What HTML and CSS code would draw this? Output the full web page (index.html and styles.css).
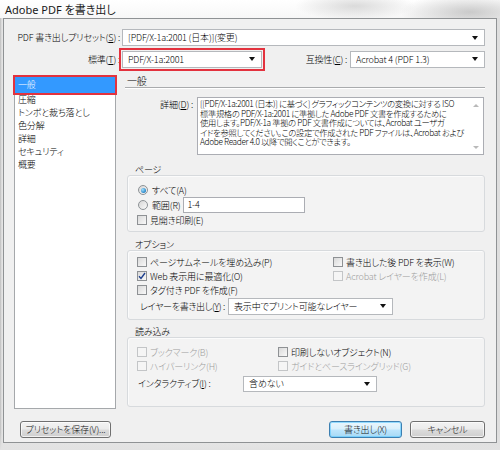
FILE: index.html
```html
<!DOCTYPE html>
<html lang="ja">
<head>
<meta charset="utf-8">
<title>Adobe PDF を書き出し</title>
<link rel="stylesheet" href="styles.css">
</head>
<body>
<div class="window">
  <div class="titlebar">Adobe PDF を書き出し</div>
  <div class="dialog">
    <div class="top-row">
      <span class="top-label">PDF 書き出しプリセット(<u>S</u>) :</span>
      <div class="select select-preset"><span>[PDF/X-1a:2001 (日本)](変更)</span><i class="arrow"></i></div>
    </div>
    <div class="top-row row-std">
      <span class="top-label">標準(<u>T</u>) :</span>
      <div class="select select-std marked"><span>PDF/X-1a:2001</span><i class="arrow"></i></div>
      <span class="compat-label">互換性(<u>C</u>) :</span>
      <div class="select select-compat"><span>Acrobat 4 (PDF 1.3)</span><i class="arrow"></i></div>
    </div>

    <div class="main">
      <ul class="nav">
        <li class="nav-item selected">一般</li>
        <li class="nav-item">圧縮</li>
        <li class="nav-item">トンボと裁ち落とし</li>
        <li class="nav-item">色分解</li>
        <li class="nav-item">詳細</li>
        <li class="nav-item">セキュリティ</li>
        <li class="nav-item">概要</li>
      </ul>

      <div class="pane">
        <div class="pane-head">一般</div>

        <div class="detail-row">
          <span class="detail-label">詳細(<u>D</u>) :</span>
          <div class="textarea">
            <div class="ta-text">[[PDF/X-1a:2001 (日本)] に基づく] グラフィックコンテンツの変換に対する ISO<br>標準規格の PDF/X-1a:2001 に準拠した Adobe PDF 文書を作成するために<br>使用します。PDF/X-1a 準拠の PDF 文書作成については、Acrobat ユーザガ<br>イドを参照してください。この設定で作成された PDF ファイルは、Acrobat および<br>Adobe Reader 4.0 以降で開くことができます。</div>
            <div class="ta-scroll"><i class="sarrow up"></i><i class="sarrow down"></i></div>
          </div>
        </div>

        <div class="group-title title-pages">ページ</div>
        <div class="group-box box-pages">
          <div class="opt"><span class="radio on"></span><span>すべて(A)</span></div>
          <div class="opt opt-range"><span class="radio"></span><span>範囲(R)</span><div class="input">1-4</div></div>
          <div class="opt"><span class="cb"></span><span>見開き印刷(E)</span></div>
        </div>

        <div class="group-title title-options">オプション</div>
        <div class="group-box box-options">
          <div class="opt-grid grid-options">
            <div class="opt"><span class="cb"></span><span>ページサムネールを埋め込み(P)</span></div>
            <div class="opt"><span class="cb"></span><span>書き出した後 PDF を表示(W)</span></div>
            <div class="opt"><span class="cb checked"><svg width="8" height="8" viewBox="0 0 8 8"><path d="M1 4.2 L3 6.4 L7 1" fill="none" stroke="#1d3f8e" stroke-width="1.4"/></svg></span><span>Web 表示用に最適化(O)</span></div>
            <div class="opt disabled"><span class="cb"></span><span>Acrobat レイヤーを作成(L)</span></div>
            <div class="opt"><span class="cb"></span><span>タグ付き PDF を作成(F)</span></div>
          </div>
          <div class="select-row layer-row">
            <span class="layer-label">レイヤーを書き出し(<u>Y</u>) :</span>
            <div class="select select-layer"><span>表示中でプリント可能なレイヤー</span><i class="arrow"></i></div>
          </div>
        </div>

        <div class="group-title title-import">読み込み</div>
        <div class="group-box box-import">
          <div class="opt-grid grid-import">
            <div class="opt disabled"><span class="cb"></span><span>ブックマーク(B)</span></div>
            <div class="opt"><span class="cb"></span><span>印刷しないオブジェクト(N)</span></div>
            <div class="opt disabled"><span class="cb"></span><span>ハイパーリンク(H)</span></div>
            <div class="opt disabled"><span class="cb"></span><span>ガイドとベースライングリッド(G)</span></div>
          </div>
          <div class="select-row interactive-row">
            <span class="inter-label">インタラクティブ(<u>I</u>) :</span>
            <div class="select select-inter"><span>含めない</span><i class="arrow"></i></div>
          </div>
        </div>
      </div>
    </div>

    <div class="footer">
      <button class="btn btn-save">プリセットを保存(V)...</button>
      <div class="footer-right">
        <button class="btn btn-export">書き出し(X)</button>
        <button class="btn btn-cancel">キャンセル</button>
      </div>
    </div>
  </div>
</div>
</body>
</html>
```

FILE: styles.css
```css
* { box-sizing: border-box; }

html, body {
  margin: 0;
  padding: 0;
}

body {
  width: 500px;
  height: 450px;
  overflow: hidden;
  font-family: "Noto Sans CJK JP", "Noto Sans", sans-serif;
  font-weight: 300;
  font-size: 9px;
  font-feature-settings: "palt";
  letter-spacing: -0.15px;
  color: #000;
}

u { text-decoration: underline; text-underline-offset: 1px; }

.window {
  width: 500px;
  height: 450px;
  background:
    linear-gradient(180deg, rgba(255,255,255,0) 0%, rgba(255,255,255,0) 96%, #e2e2e2 100%),
    linear-gradient(90deg, #bdbdbd 0, #e4e4e4 2px, #e9e9e9 50%, #dedede 100%);
  display: flex;
  flex-direction: column;
}

.titlebar {
  height: 18px;
  padding-left: 5px;
  font-family: "Noto Sans", "Noto Sans CJK JP", sans-serif;
  font-weight: 400;
  font-size: 11px;
  letter-spacing: 0;
  line-height: 20px;
  color: #1a1a1a;
  background:
    radial-gradient(ellipse 60px 14px at 355px 6px, rgba(190,190,190,0.55), rgba(190,190,190,0)),
    radial-gradient(ellipse 70px 18px at 470px 12px, rgba(170,170,170,0.6), rgba(170,170,170,0)),
    linear-gradient(180deg, #ffffff, #f7f7f7);
}

.dialog {
  margin: 0 3px;
  height: 425px;
  border: 1px solid #8f9294;
  background: #f0f0f0;
  padding: 10px 11px 4px 10px;
  display: flex;
  flex-direction: column;
}

/* top rows */
.top-row {
  display: flex;
  align-items: center;
  height: 17px;
}
.row-std {
  margin-top: 4px;
  height: 18px;
}
.top-label {
  width: 106px;
  margin-right: 2px;
  text-align: right;
  white-space: nowrap;
}
.compat-label {
  margin-left: auto;
  margin-right: 3px;
  white-space: nowrap;
}

.select {
  display: flex;
  align-items: center;
  height: 17px;
  background: #fff;
  border: 1px solid #b5b8bc;
  padding: 0 6px 0 5px;
  white-space: nowrap;
}
.select span { flex: 1; overflow: hidden; }
.arrow {
  flex: none;
  width: 0;
  height: 0;
  border-left: 3px solid transparent;
  border-right: 3px solid transparent;
  border-top: 4px solid #111;
  margin-left: 4px;
}
.select-preset { flex: 1; }
.select-std { width: 140px; }
.select-compat { width: 135px; }
.marked {
  outline: 2px solid #e3323e;
  outline-offset: 1px;
}

/* main */
.main {
  display: flex;
  margin-top: 7px;
  height: 334px;
}

.nav {
  list-style: none;
  margin: 0;
  padding: 1px 0 0 0;
  width: 102px;
  height: 334px;
  flex: none;
  background: #fff;
  border: 1px solid #a5a8ab;
}
.nav-item {
  height: 13px;
  line-height: 13px;
  padding-left: 3px;
  white-space: nowrap;
}
.nav-item.selected {
  height: 16px;
  line-height: 16px;
  background: #3399ff;
  color: #fff;
  outline: 2px solid #e3323e;
  outline-offset: 0;
}

.pane {
  flex: 1;
  margin-left: 9px;
  display: flex;
  flex-direction: column;
}

.pane-head {
  height: 13px;
  line-height: 12px;
  padding-left: 2px;
  font-size: 10px;
  border-bottom: 1px solid #a9abad;
  box-shadow: 0 1px 0 #ffffff;
}

.detail-row {
  display: flex;
  margin-top: 9px;
}
.detail-label {
  width: 68px;
  margin-right: 4px;
  text-align: right;
  padding-top: 1px;
  white-space: nowrap;
}
.textarea {
  width: 287px;
  height: 58px;
  background: #fff;
  border: 1px solid #abadb3;
  display: flex;
}
.ta-text {
  flex: 1;
  padding: 1px 0 0 2px;
  font-size: 8.3px;
  line-height: 9.6px;
  letter-spacing: -0.35px;
  white-space: nowrap;
  overflow: hidden;
}
.ta-scroll {
  width: 14px;
  flex: none;
  display: flex;
  flex-direction: column;
  justify-content: space-between;
  align-items: center;
  padding: 6px 0 5px;
}
.sarrow {
  width: 0;
  height: 0;
  border-left: 3px solid transparent;
  border-right: 3px solid transparent;
}
.sarrow.up { border-bottom: 3px solid #b9b9b9; }
.sarrow.down { border-top: 3px solid #b9b9b9; }

/* groups */
.group-title {
  height: 9px;
  line-height: 8px;
  padding-left: 10px;
  white-space: nowrap;
}
.title-pages { margin-top: 11px; }
.title-options { margin-top: 9px; }
.title-import { margin-top: 8px; }

.group-box {
  margin-left: 2px;
  border: 1px solid #d7dadd;
  border-radius: 3px;
  background: #f3f3f3;
  box-shadow: inset 1px 1px 0 #fbfbfb;
  padding-left: 9px;
}
.box-pages { height: 57px; padding-top: 7px; }
.box-options { height: 70px; padding-top: 4px; }
.box-import { height: 70px; padding-top: 7px; }

.opt {
  display: flex;
  align-items: center;
  height: 14px;
  white-space: nowrap;
}
.opt-range { height: 16px; }
.opt.disabled { color: #9c9c9c; }

.radio {
  width: 10px;
  height: 10px;
  border-radius: 50%;
  border: 1px solid #8d9296;
  background: linear-gradient(135deg, #d6d6d6, #fafafa);
  margin: 0 4px 0 1px;
  flex: none;
  display: flex;
  align-items: center;
  justify-content: center;
}
.radio.on::after {
  content: "";
  width: 5px;
  height: 5px;
  border-radius: 50%;
  background: radial-gradient(circle at 35% 35%, #9fe0ff, #2a86c6 70%, #1b5f93);
}

.cb {
  width: 10px;
  height: 10px;
  border: 1px solid #8e9194;
  background: linear-gradient(135deg, #d9d9d9, #f9f9f9);
  margin-right: 3px;
  flex: none;
  display: flex;
  align-items: center;
  justify-content: center;
}
.disabled .cb {
  border-color: #c3c5c7;
  background: #f5f5f5;
}
.cb svg { display: block; }

.input {
  margin-left: 3px;
  width: 122px;
  height: 16px;
  border: 1px solid #abadb3;
  background: #fff;
  padding-left: 3px;
  line-height: 14px;
}

.opt-grid {
  display: grid;
}
.grid-options { grid-template-columns: 196px 1fr; }
.grid-import { grid-template-columns: 141px 1fr; }

.select-row {
  display: flex;
  align-items: center;
  white-space: nowrap;
}
.layer-row {
  height: 18px;
  padding-left: 3px;
}
.layer-label { margin-right: 3px; letter-spacing: -0.3px; }
.select-layer { width: 165px; }
.interactive-row {
  margin-top: 2px;
  height: 17px;
}
.inter-label { width: 106px; padding-left: 1px; }
.select-inter { width: 134px; height: 16px; }

/* footer */
.footer {
  display: flex;
  align-items: center;
  margin-top: 12px;
  height: 17px;
  padding-left: 6px;
}
.footer-right {
  margin-left: auto;
  display: flex;
  gap: 8px;
}
.btn {
  font: inherit;
  letter-spacing: inherit;
  color: #111;
  height: 17px;
  padding: 0;
  white-space: nowrap;
  border: 1px solid #707070;
  border-radius: 3px;
  background: linear-gradient(180deg, #f3f3f3 0%, #ebebeb 48%, #dcdcdc 52%, #cfcfcf 100%);
  box-shadow: inset 0 0 0 1px rgba(255,255,255,0.7);
  line-height: 14px;
}
.btn-save { width: 91px; }
.btn-export {
  width: 73px;
  border-color: #3c7fb1;
  background: linear-gradient(180deg, #eaf6fd 0%, #d9f0fc 48%, #bee6fd 52%, #a7d9f5 100%);
  box-shadow: inset 0 0 0 1px rgba(90,200,255,0.6);
}
.btn-cancel { width: 75px; }
```
